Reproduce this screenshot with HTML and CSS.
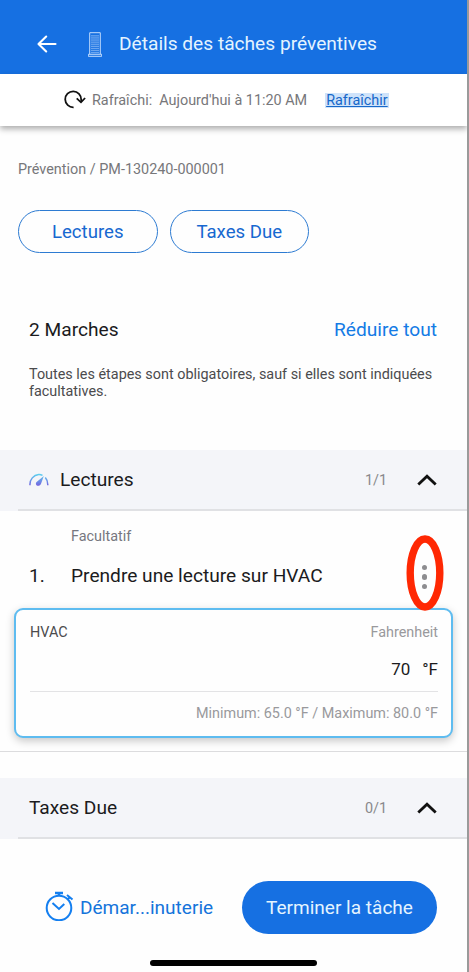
FILE: index.html
```html
<!DOCTYPE html>
<html lang="fr">
<head>
<meta charset="utf-8">
<title>Détails des tâches préventives</title>
<link rel="stylesheet" href="styles.css">
</head>
<body>
<div class="app">
  <header class="topbar">
    <svg class="back" width="20" height="18" viewBox="0 0 20 18" fill="none" stroke="#fff" stroke-width="2.1" stroke-linecap="round" stroke-linejoin="round"><path d="M9.2 1.5 1.5 9l7.7 7.5M1.8 9H18.5"/></svg>
    <svg class="building" width="14" height="25" viewBox="0 0 14 25" fill="none" stroke="#d5e8ff"><path d="M1.7 22V.7h10.6V22M.3 22.3h13.4v2H.3z" stroke-width=".9"/><path d="M4 3.200v18M6 3.200v18M8 3.200v18M10 3.200v18" stroke-width=".9" stroke-dasharray="1.300 .8"/></svg>
    <h1 class="title">Détails des tâches préventives</h1>
  </header>
  <div class="refresh">
    <svg class="reload" width="22" height="19" viewBox="0 0 22 19" fill="none" stroke="#111" stroke-width="1.8"><path d="M9.6 17.3A8 8 0 1 1 17.2 9.6V12"/><path d="M12.7 8.4 17 12.3l4.1-4.3"/></svg>
    <span class="stamp">Rafraîchi:&nbsp; Aujourd'hui à 11:20 AM</span>
    <a class="link">Rafraîchir</a>
  </div>
  <main>
    <div class="crumb">Prévention / PM-130240-000001</div>
    <nav class="pills"><a class="pill">Lectures</a><a class="pill">Taxes Due</a></nav>
    <section class="intro">
      <div class="intro-head"><h2>2 Marches</h2><a class="collapse">Réduire tout</a></div>
      <p>Toutes les étapes sont obligatoires, sauf si elles sont indiquées<br>facultatives.</p>
    </section>
    <section>
      <div class="band">
        <svg class="gauge" width="20" height="14" viewBox="0 0 20 14" fill="none"><defs><linearGradient id="arc" gradientUnits="userSpaceOnUse" x1="0" y1="1" x2="0" y2="13"><stop offset="0" stop-color="#5bd2ef"/><stop offset="1" stop-color="#7560e0"/></linearGradient></defs><path d="M1 12.200C.5 6.500 4.700 1.900 9.700 1.500c1.500-.1 2.800.3 3.800.8M16.300 4.600c1.700 1.900 2.600 4.400 2.500 7.600" stroke="url(#arc)" stroke-width="1.500"/><path d="M14.800 3 7.600 9c-2 2.200.5 5.200 3.300 3.200.8-.6 1.100-1.300 1.400-2.200z" fill="url(#arc)"/></svg>
        <h3>Lectures</h3><span class="count">1/1</span>
        <svg class="chev" width="20" height="12" viewBox="0 0 20 12" fill="none" stroke="#111" stroke-width="2.800"><path d="M1.300 10.600 10 2.200l8.700 8.400"/></svg>
      </div>
      <div class="step">
        <div class="optional">Facultatif</div>
        <div class="step-row"><span class="num">1.</span><span class="step-name">Prendre une lecture sur HVAC</span>
          <span class="more"><i></i><i></i><i></i><svg class="ring" width="38" height="76" viewBox="0 0 38 76"><ellipse cx="19" cy="38" rx="14.800" ry="34" fill="none" stroke="#ff2803" stroke-width="7.400"/></svg></span>
        </div>
        <div class="card">
          <div class="labels"><span>HVAC</span><span class="unit">Fahrenheit</span></div>
          <div class="value"><span>70</span><span>°F</span></div>
          <div class="range">Minimum: 65.0 °F / Maximum: 80.0 °F</div>
        </div>
      </div>
    </section>
    <section class="taxes">
      <div class="band"><h3>Taxes Due</h3><span class="count">0/1</span>
        <svg class="chev" width="20" height="12" viewBox="0 0 20 12" fill="none" stroke="#111" stroke-width="2.800"><path d="M1.300 10.600 10 2.200l8.700 8.400"/></svg>
      </div>
    </section>
  </main>
  <footer>
    <div class="actions">
      <a class="timer"><svg width="29" height="30" viewBox="0 0 29 30" fill="none" stroke="#147ff0" stroke-width="2"><circle cx="14" cy="17" r="12.300"/><path d="M7.500 12l6.500 6 5.300-5M22 4l5.500 4.500M24.800 6.200 22.500 8.500"/><path d="M10 2h8M14 2v2.500" stroke-width="2.600"/></svg><span>Démar...inuterie</span></a>
      <a class="finish">Terminer la tâche</a>
    </div>
    <div class="home"></div>
  </footer>
</div>
</body>
</html>
```
FILE: styles.css
```css
* { box-sizing: border-box; }
body { margin: 0; font-family: Roboto, "Liberation Sans", sans-serif; font-size: 14.4px; background: #fefefe; color: #1b1b1d; }
h1, h2, h3, p { margin: 0; font-weight: 400; }
.app { height: 972px; display: flex; flex-direction: column; border-right: 2px solid #9a9a9a; overflow: hidden; white-space: nowrap; }
.topbar { height: 74px; flex: none; background: #1670e2; display: flex; align-items: center; padding: 14px 0 0 37px; }
.building { margin-left: 31px; }
.title { margin-left: 17px; font-size: 19.15px; line-height: 24px; color: #e4f4ff; }
.refresh { height: 52px; flex: none; background: #fff; box-shadow: 0 3px 6px rgba(0,0,0,.32); display: flex; align-items: center; padding: 0 0 1px 64px; color: #77777a; }
.stamp { margin-left: 6px; padding-top: 1px; }
.link { margin: 1px 0 0 18px; padding: 0 1px; line-height: 15px; background: #cfe3fa; color: #1768c9; text-decoration: underline; }
.crumb { margin: 34px 0 0 18px; height: 20px; line-height: 20px; color: #77777a; }
.pills { margin: 30px 0 0 18px; display: flex; gap: 12px; }
.pill { width: 139.5px; height: 43px; padding-top: 1px; border: 1.5px solid #2d7bd2; border-radius: 22px; display: flex; align-items: center; justify-content: center; font-size: 18.6px; color: #1768d0; }
.intro { height: 197px; padding: 65px 30px 0 29px; }
.intro-head { display: flex; justify-content: space-between; line-height: 24px; }
.intro h2, .collapse { font-size: 19.15px; }
.collapse { color: #147be5; }
.intro p { margin-top: 24px; line-height: 17px; color: #4b4b4d; }
.band { height: 61px; background: linear-gradient(#e0e1e4, #e0e1e4) 18px 100% / 100% 2px no-repeat #f4f5f9; padding: 0 30px 2px 29px; display: flex; align-items: center; }
.gauge { margin-right: 11px; }
.band h3 { font-size: 19.15px; line-height: 24px; padding-top: 1px; }
.count { margin-left: auto; padding-top: 1px; color: #88888b; }
.chev { margin-left: 30px; }
.step { height: 241px; padding-top: 16px; border-bottom: 1px solid #dcdcde; }
.optional { margin-left: 71px; line-height: 20px; color: #77777f; }
.step-row { height: 61px; display: flex; align-items: center; padding: 0 37px 5px 29px; font-size: 19.15px; }
.num { width: 42px; }
.more { position: relative; margin-left: auto; margin-right: 3px; display: flex; flex-direction: column; gap: 4px; width: 5px; padding-top: 4px; }
.more i { width: 5.4px; height: 5.4px; border-radius: 50%; background: #8d8d90; }
.ring { position: absolute; left: -16px; top: -26px; }
.card { position: relative; z-index: -1; margin: 0 14px; height: 130px; border: 2.5px solid #5ebcf0; border-radius: 9px; background: #fefefe; box-shadow: 0 3px 8px rgba(0,0,0,.22); padding: 14px 13px 0 14px; }
.labels { display: flex; justify-content: space-between; line-height: 18px; color: #4b4b4d; }
.unit, .range { color: #99999c; }
.value { height: 50px; border-bottom: 1px solid #e3e3e5; display: flex; justify-content: flex-end; gap: 12px; font-size: 17px; line-height: 54px; }
.range { text-align: right; line-height: 43px; }
.taxes { margin-top: 26px; }
footer { flex: 1; }
.actions { display: flex; padding: 42px 30px 0 45px; height: 95px; align-items: center; justify-content: space-between; font-size: 19.05px; }
.timer { display: flex; align-items: center; color: #1474db; gap: 6px; }
.timer svg { margin-top: -3px; }
.finish { width: 195px; height: 53px; border-radius: 27px; background: #1670e2; color: #e4f4ff; display: flex; justify-content: center; align-items: center; }
.home { width: 167px; height: 6px; border-radius: 3px; background: #000; margin: 26px 0 0 150px; }
```
